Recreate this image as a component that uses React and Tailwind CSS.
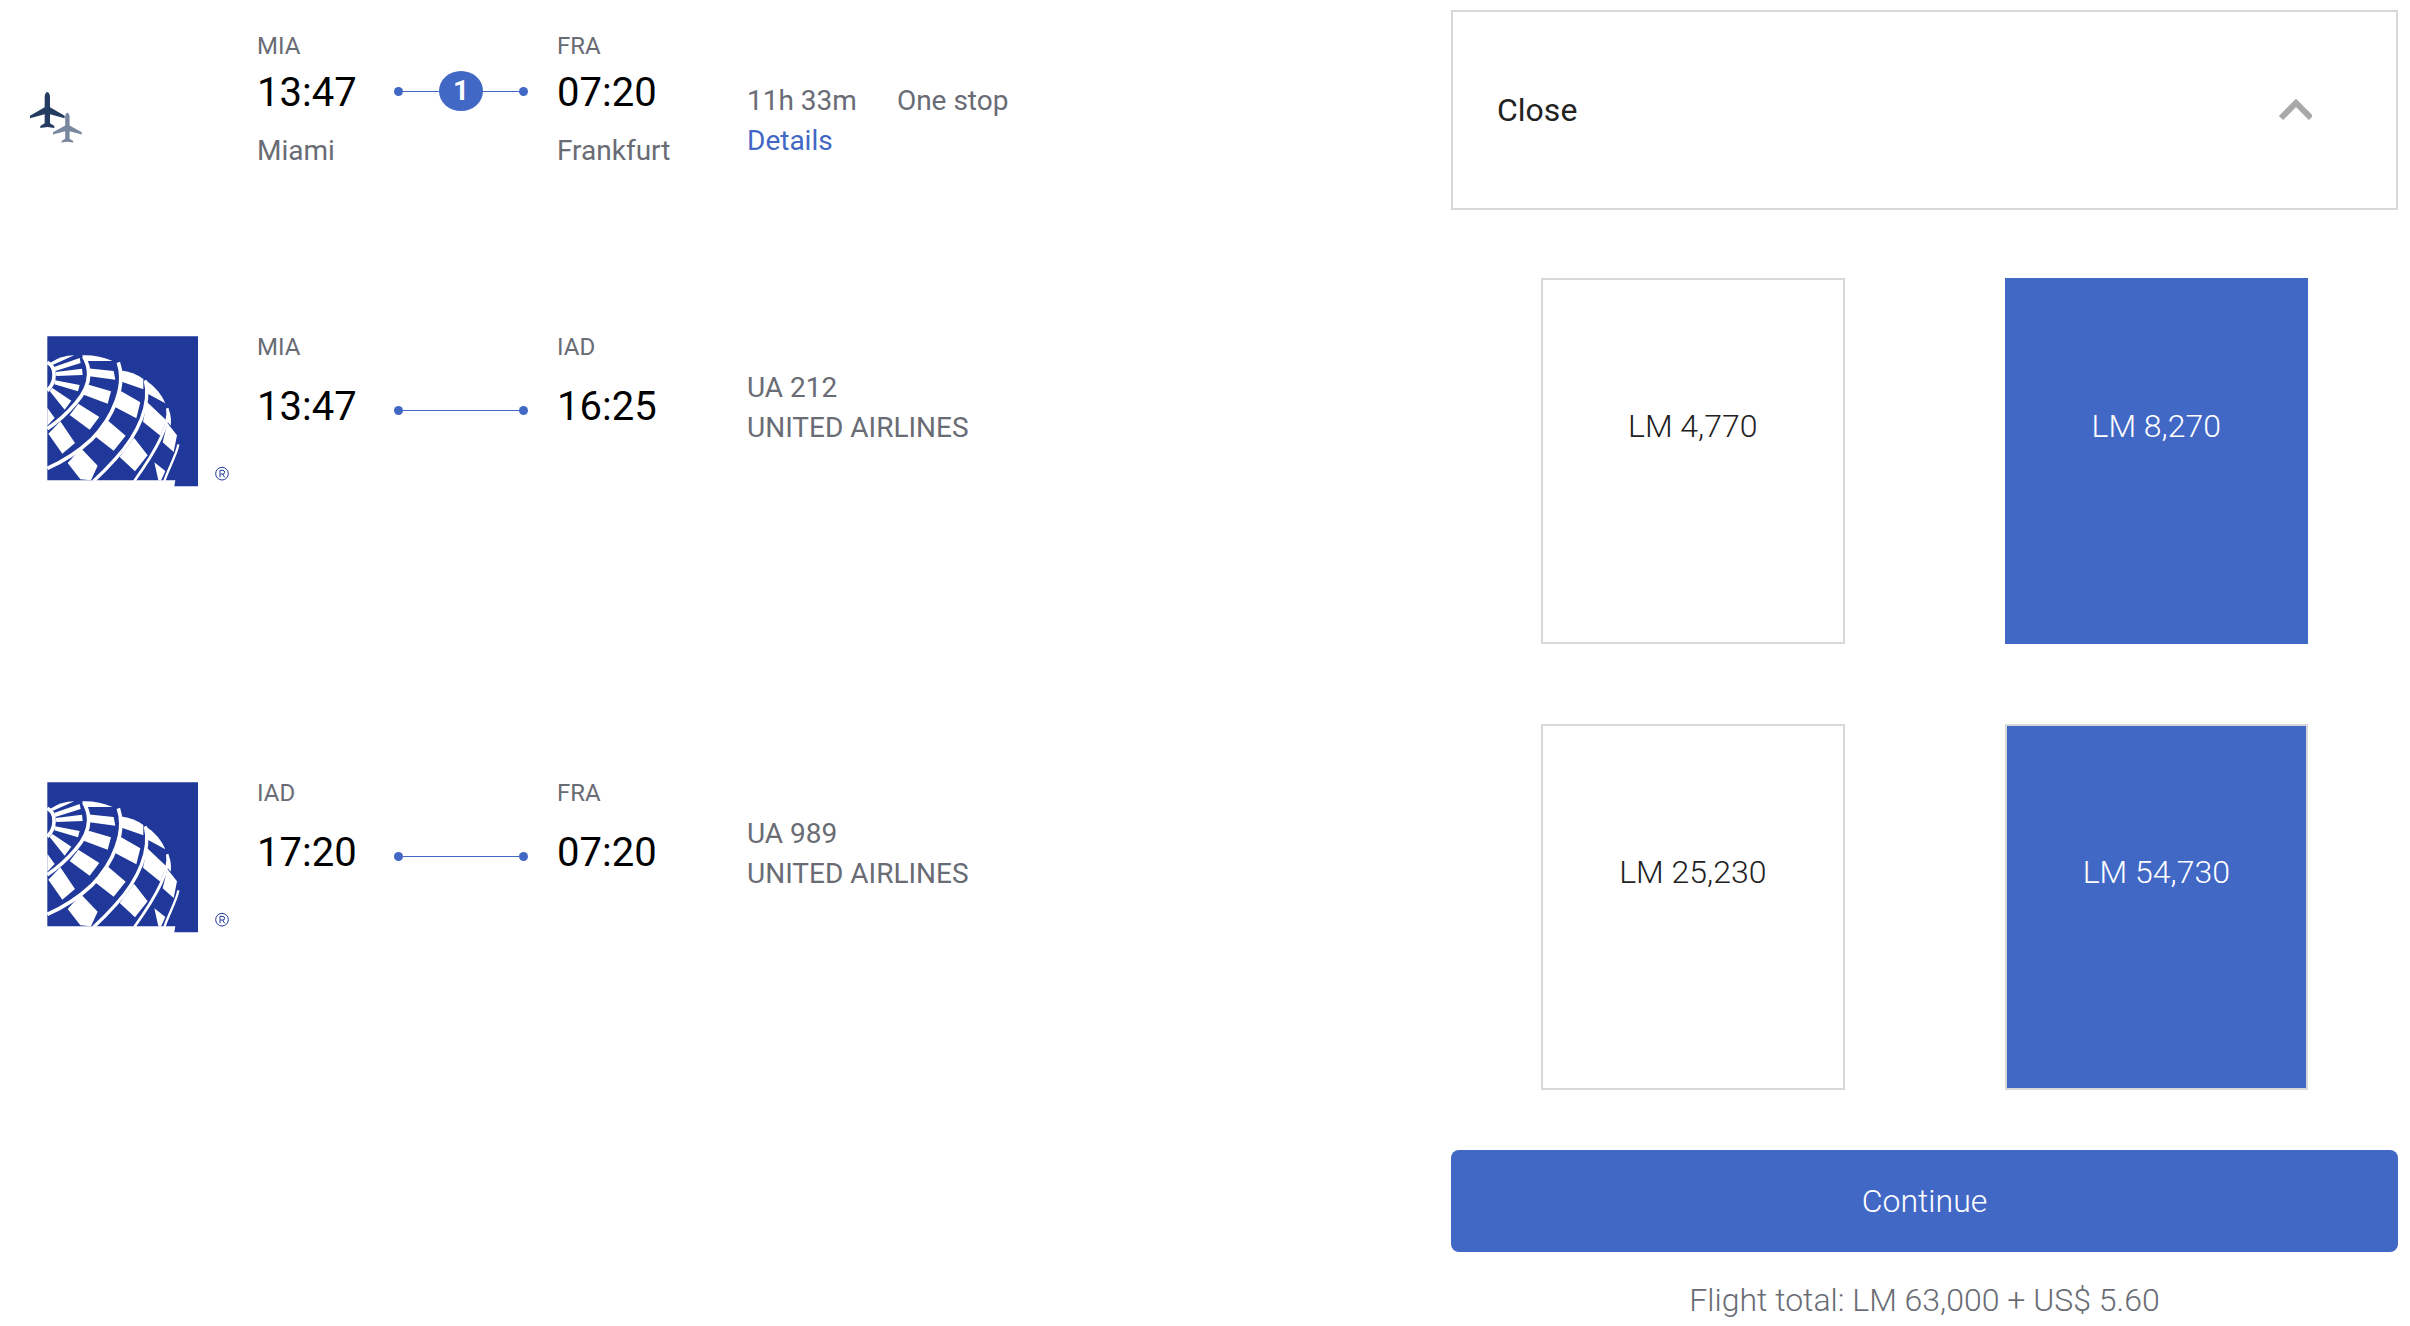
import React from 'react';

const segments = [
  {
    from: 'MIA',
    departs: '13:47',
    to: 'IAD',
    arrives: '16:25',
    flight: 'UA 212',
    carrier: 'UNITED AIRLINES',
    fares: [
      { price: 'LM 4,770', style: 'border-[#d8d8d8] bg-white text-[#222222]' },
      { price: 'LM 8,270', style: 'border-[#4268c6] bg-[#4268c6] text-white' },
    ],
  },
  {
    from: 'IAD',
    departs: '17:20',
    to: 'FRA',
    arrives: '07:20',
    flight: 'UA 989',
    carrier: 'UNITED AIRLINES',
    fares: [
      { price: 'LM 25,230', style: 'border-[#d8d8d8] bg-white text-[#222222]' },
      { price: 'LM 54,730', style: 'border-[#d8d8d8] bg-[#4268c6] text-white' },
    ],
  },
];

const PLANE =
  'M52 0 C56 0 60 7 60 14 V46 L104 71 V79 L60 67 V94 L73 102 V108 L52 105 L31 108 V102 L44 94 V67 L0 79 V71 L44 46 V14 C44 7 48 0 52 0 Z';

const PlanesIcon = () => (
  <svg width="52" height="51" viewBox="0 0 156 153" aria-hidden="true">
    <path d={PLANE} fill="#243b62" />
    <path d={PLANE} fill="#7a889f" transform="translate(69 62) scale(0.83)" />
  </svg>
);

const UnitedLogo = () => (
  <svg width="184" height="151" viewBox="50 47 552 453" role="img" aria-label="United Airlines">
    <path d="M51 48 H503 V498 H432 L435 480 H51 Z" fill="#1f3899" />
    {/* Meridians */}
    <g fill="none" stroke="white" strokeWidth="11">
      <path d="M51 126 C78 138 78 184 51 211" />
      <path d="M160 108 C190 160 174 206 135 250 Q98 294 51 325" />
      <path d="M264 126 C288 195 250 290 183 358 Q125 412 51 444" />
      <path d="M345 180 C363 250 325 340 256 415 Q225 450 190 482" strokeWidth="10" />
      <path d="M411 264 C420 310 385 380 312 482" strokeWidth="8" />
      <path d="M444 372 C440 400 412 450 402 482" strokeWidth="7" />
    </g>
    {/* Tiles */}
    <g fill="white">
      <path d="M60 127 Q92 106 132 105 L68 133 Z" />
      <path d="M71 140 L148 113 L151 128 L75 152 Z" />
      <path d="M76 155 L155 145 L157 164 L78 167 Z" />
      <path d="M74 180 L148 194 L143 213 L72 192 Z" />
      <path d="M66 203 L123 241 L103 268 L58 212 Z" />
      <path d="M51 262 L73 293 L51 316 Z" />
      <path d="M155 105 Q203 103 247 122 L166 122 Z" />
      <path d="M170 144 L250 152 L255 178 L172 167 Z" />
      <path d="M170 192 L242 213 L232 250 L156 222 Z" />
      <path d="M144 250 L207 290 L178 328 L118 284 Z" />
      <path d="M90 303 L134 368 L96 400 L54 340 Z" />
      <path d="M270 150 Q310 155 339 176 L339 207 L268 182 Z" />
      <path d="M266 209 L330 246 L318 294 L254 260 Z" />
      <path d="M228 297 L286 346 L250 391 L194 348 Z" />
      <path d="M152 384 L202 436 L182 480 L150 477 L112 428 Z" />
      <path d="M344 178 Q388 207 405 249 L352 220 Z" />
      <path d="M350 245 L408 300 L390 346 L338 304 Z" />
      <path d="M311 352 L352 405 L314 453 L268 410 Z" />
      <path d="M411 262 L417 272 Q424 292 421 316 L411 304 Z" />
      <path d="M411 308 L440 345 L430 395 L397 366 Z" />
      <path d="M372 426 L405 452 L392 481 L384 480 Z" />
    </g>
    {/* Registered mark */}
    <circle cx="575" cy="460" r="19" fill="none" stroke="#1f3899" strokeWidth="3" />
    <path d="M569 471 V450 H578 Q583 451 583 456 Q583 461 577 461 H570 M577 461 L583 471" fill="none" stroke="#1f3899" strokeWidth="3" />
  </svg>
);

const RouteLine = ({ stops }) => (
  <div className="flex h-10 w-[134px] items-center">
    <span className="h-[9px] w-[9px] rounded-full bg-[#4268c6]" />
    <span className="h-px flex-1 bg-[#4268c6]" />
    {stops && (
      <span className="flex h-10 w-11 items-center justify-center rounded-[50%] bg-[#4268c6] text-[28px] font-bold text-white">
        {stops}
      </span>
    )}
    <span className="h-px flex-1 bg-[#4268c6]" />
    <span className="h-[9px] w-[9px] rounded-full bg-[#4268c6]" />
  </div>
);

const JourneyStop = ({ code, time, city }) => (
  <div className="pt-5">
    <p className="text-[24px] leading-8 text-[#696c74]">{code}</p>
    <p className="mt-[7px] text-[40px] leading-12 text-black">{time}</p>
    <p className="mt-3.5 text-[28px] leading-10 text-[#696c74]">{city}</p>
  </div>
);

const LegStop = ({ code, time }) => (
  <div className="pt-[53px]">
    <p className="text-[24px] leading-8 text-[#696c74]">{code}</p>
    <p className="mt-5 text-[40px] leading-12 text-black">{time}</p>
  </div>
);

const Segment = ({ segment }) => (
  <section className="grid grid-cols-[1451fr_947fr]">
    <div className="grid grid-cols-[257px_137px_163px_190px_1fr] items-start">
      <div className="pl-[47px] pt-[58px]">
        <UnitedLogo />
      </div>
      <LegStop code={segment.from} time={segment.departs} />
      <div className="pt-28">
        <RouteLine />
      </div>
      <LegStop code={segment.to} time={segment.arrives} />
      <div className="pt-[90px] text-[28px] leading-10 text-[#696c74]">
        <p>{segment.flight}</p>
        <p>{segment.carrier}</p>
      </div>
    </div>
    <div className="grid grid-cols-2 gap-40 px-[90px]">
      {segment.fares.map((fare) => (
        <button
          key={fare.price}
          className={`flex h-[366px] justify-center border-2 pt-[126px] text-[32px] leading-10 font-light ${fare.style}`}
        >
          {fare.price}
        </button>
      ))}
    </div>
  </section>
);

const App = () => {
  return (
    <main className="min-h-screen bg-white pr-3 pt-2.5 font-['Roboto',sans-serif]">
      {/* Whole journey */}
      <section className="grid grid-cols-[1451fr_947fr]">
        <div className="grid grid-cols-[257px_137px_163px_190px_1fr] items-start">
          <div className="pl-[30px] pt-[82px]">
            <PlanesIcon />
          </div>
          <JourneyStop code="MIA" time="13:47" city="Miami" />
          <div className="pt-[61px]">
            <RouteLine stops={1} />
          </div>
          <JourneyStop code="FRA" time="07:20" city="Frankfurt" />
          <div className="pt-[71px] text-[28px] leading-10 text-[#696c74]">
            <p className="flex gap-10">
              <span>11h 33m</span>
              <span>One stop</span>
            </p>
            <a href="#details" className="text-[#4268c6]">Details</a>
          </div>
        </div>
        <button className="flex h-50 items-center justify-between border-2 border-[#d8d8d8] pl-11 pr-[84px] text-[32px] text-[#222222]">
          Close
          <svg width="34" height="22" viewBox="0 0 34 22" fill="none" aria-hidden="true">
            <path d="M3 19 L18 4 L33 19" stroke="#a8a8a8" strokeWidth="6" />
          </svg>
        </button>
      </section>

      {/* Legs with their fares */}
      <div className="mt-[68px] flex flex-col gap-20">
        {segments.map((segment) => (
          <Segment key={segment.flight} segment={segment} />
        ))}
      </div>

      {/* Total */}
      <section className="mt-15 grid grid-cols-[1451fr_947fr]">
        <div className="col-start-2 text-center text-[32px] leading-10 font-light">
          <button className="h-[102px] w-full rounded-lg bg-[#4268c6] text-white">Continue</button>
          <p className="mt-7 text-[#696c74]">Flight total: LM 63,000 + US$ 5.60</p>
        </div>
      </section>
    </main>
  );
};

export default App;
